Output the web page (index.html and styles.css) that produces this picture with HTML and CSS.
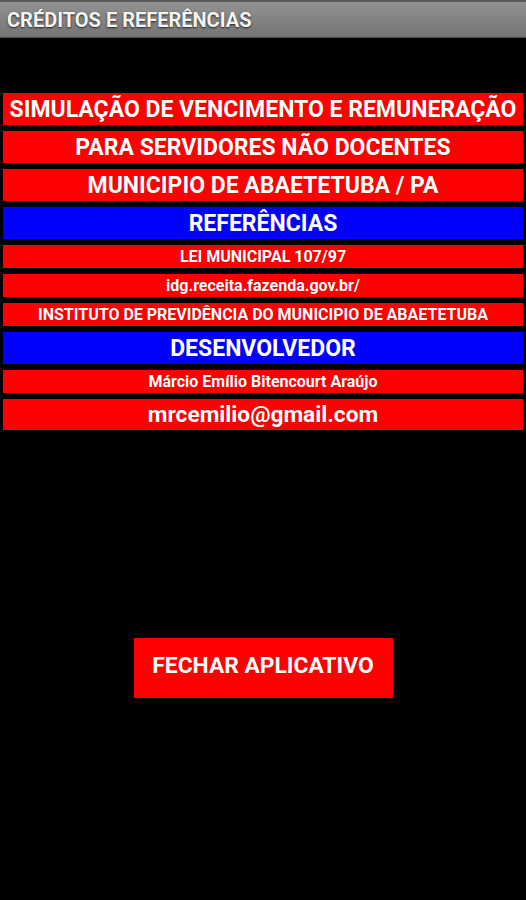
FILE: index.html
```html
<!DOCTYPE html>
<html lang="pt-BR">
<head>
<meta charset="utf-8">
<title>Créditos e Referências</title>
<link rel="stylesheet" href="styles.css">
</head>
<body>
<header class="titlebar">CRÉDITOS E REFERÊNCIAS</header>
<main class="content">
  <div class="list">
    <div class="row red big">SIMULAÇÃO DE VENCIMENTO E REMUNERAÇÃO</div>
    <div class="row red big">PARA SERVIDORES NÃO DOCENTES</div>
    <div class="row red big">MUNICIPIO DE ABAETETUBA / PA</div>
    <div class="row blue big">REFERÊNCIAS</div>
    <div class="row red small">LEI MUNICIPAL 107/97</div>
    <div class="row red small">idg.receita.fazenda.gov.br/</div>
    <div class="row red small">INSTITUTO DE PREVIDÊNCIA DO MUNICIPIO DE ABAETETUBA</div>
    <div class="row blue big">DESENVOLVEDOR</div>
    <div class="row red small">Márcio Emílio Bitencourt Araújo</div>
    <div class="row red mail">mrcemilio@gmail.com</div>
  </div>
  <button class="close">FECHAR APLICATIVO</button>
</main>
</body>
</html>
```
FILE: styles.css
```css
html, body {
  margin: 0;
  padding: 0;
  background: #000;
  height: 100%;
}
body {
  font-family: Roboto, "Liberation Sans", sans-serif;
  font-weight: 700;
  color: #fff;
}
.titlebar {
  height: 38px;
  box-sizing: border-box;
  border-top: 2px solid #5a5a5a;
  border-bottom: 1px solid #4a4a4a;
  background: linear-gradient(#929292, #747474);
  padding: 0 0 0 7px;
  display: flex;
  align-items: center;
  font-size: 20px;
  text-shadow: 0 1px 2px #222;
  color: #f4f4f4;
}
.content {
  display: flex;
  flex-direction: column;
  align-items: center;
  padding: 55px 3px 0;
}
.list {
  display: flex;
  flex-direction: column;
  gap: 6px;
  width: 100%;
}
.row {
  display: flex;
  align-items: center;
  justify-content: center;
  white-space: nowrap;
  text-shadow: 0 0 1px rgba(0,0,0,0.3);
}
.red { background: #ff0000; }
.blue { background: #0000ff; }
.big { height: 32px; font-size: 23px; }
.small { height: 23px; font-size: 16px; }
.mail { height: 31px; font-size: 22.7px; }
.close {
  margin-top: 208px;
  width: 259px;
  height: 60px;
  border: 0;
  background: #ff0000;
  color: #fff;
  font-family: Roboto, "Liberation Sans", sans-serif;
  font-weight: 700;
  font-size: 22.8px;
  padding: 0 0 5px;
}
```
